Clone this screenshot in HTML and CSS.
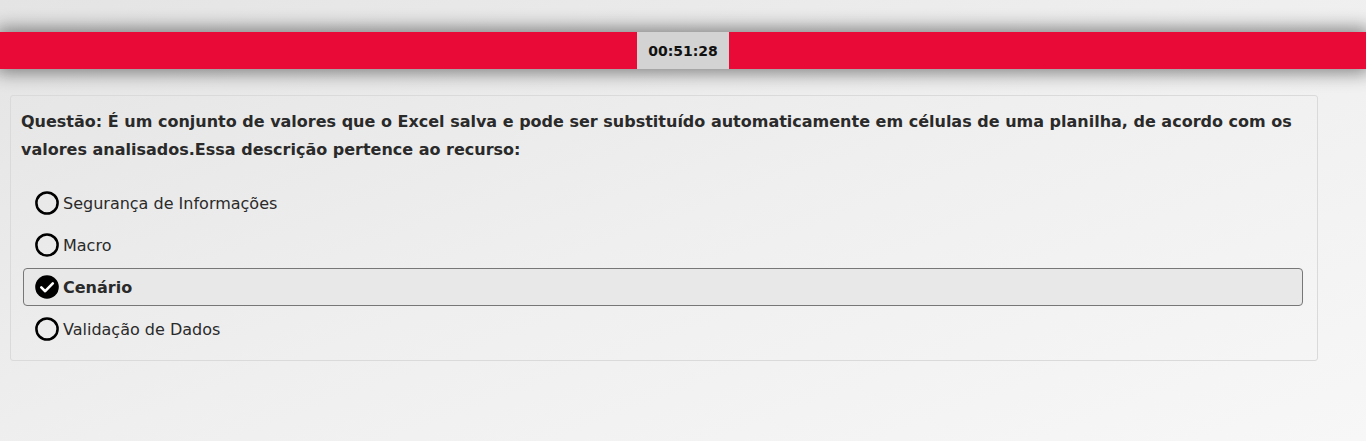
FILE: index.html
```html
<!DOCTYPE html>
<html lang="pt-BR">
<head>
<meta charset="utf-8">
<title>Questão</title>
<link rel="stylesheet" href="styles.css">
</head>
<body>
<header class="timer-bar">
  <div class="timer">00:51:28</div>
</header>
<main class="card">
  <p class="question">Questão: É um conjunto de valores que o Excel salva e pode ser substituído automaticamente em células de uma planilha, de acordo com os valores analisados.Essa descrição pertence ao recurso:</p>
  <ul class="options">
    <li class="option">
      <svg class="radio" viewBox="0 0 24 24" width="24" height="24"><circle cx="12" cy="12" r="10.6" fill="none" stroke="#000" stroke-width="2.5"/></svg>
      <span>Segurança de Informações</span>
    </li>
    <li class="option">
      <svg class="radio" viewBox="0 0 24 24" width="24" height="24"><circle cx="12" cy="12" r="10.6" fill="none" stroke="#000" stroke-width="2.5"/></svg>
      <span>Macro</span>
    </li>
    <li class="option selected">
      <svg class="radio" viewBox="0 0 24 24" width="24" height="24"><circle cx="12" cy="12" r="11.8" fill="#000"/><path d="M6.3 12.4 L10.2 16.2 L17.8 8.4" fill="none" stroke="#fff" stroke-width="2.6" stroke-linecap="round" stroke-linejoin="round"/></svg>
      <span>Cenário</span>
    </li>
    <li class="option">
      <svg class="radio" viewBox="0 0 24 24" width="24" height="24"><circle cx="12" cy="12" r="10.6" fill="none" stroke="#000" stroke-width="2.5"/></svg>
      <span>Validação de Dados</span>
    </li>
  </ul>
</main>
</body>
</html>
```
FILE: styles.css
```css
html, body {
  margin: 0;
  padding: 0;
}
body {
  box-sizing: border-box;
  height: 100vh;
  background: linear-gradient(160deg, #e4e4e4 0%, #efefef 50%, #f7f7f7 100%);
  font-family: "DejaVu Sans", Verdana, sans-serif;
  color: #222;
  padding-top: 32px;
  overflow: hidden;
}
.timer-bar {
  height: 37px;
  background: #e90a38;
  display: flex;
  justify-content: center;
  box-shadow: 0 0 18px 4px rgba(0, 0, 0, 0.45);
}
.timer {
  width: 92px;
  background: #d3d3d3;
  display: flex;
  align-items: center;
  justify-content: center;
  font-weight: bold;
  font-size: 14px;
  color: #111;
}
.card {
  margin: 26px 0 0 10px;
  width: 1286px;
  border: 1px solid #dadada;
  border-radius: 3px;
  padding: 12px 10px 12px 10px;
}
.question {
  margin: 0 0 20px 0;
  font-weight: bold;
  font-size: 16px;
  line-height: 28px;
  color: #2a2a2a;
}
.options {
  list-style: none;
  margin: 0 4px 0 2px;
  padding: 0;
  display: flex;
  flex-direction: column;
  gap: 4px;
}
.option {
  display: flex;
  align-items: center;
  height: 36px;
  padding: 0 11px;
  border: 1px solid transparent;
  border-radius: 4px;
  font-size: 16px;
  color: #2a2a2a;
}
.option .radio {
  flex: none;
  margin-right: 4px;
}
.option.selected {
  background: #e8e8e8;
  border-color: #777;
  font-weight: bold;
}
```
